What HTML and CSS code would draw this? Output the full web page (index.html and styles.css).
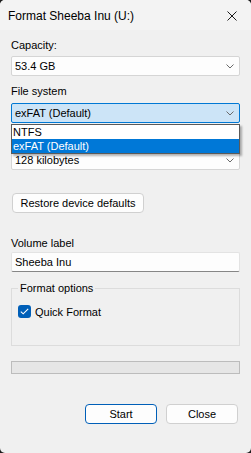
FILE: index.html
```html
<!DOCTYPE html>
<html lang="en">
<head>
    <meta charset="UTF-8">
    <title>Format Sheeba Inu (U:)</title>
    <link rel="stylesheet" href="styles.css">
</head>
<body>
    <div class="window">
        <div class="titlebar">
            <span class="title">Format Sheeba Inu (U:)</span>
            <svg class="close-x" width="10" height="10" viewBox="0 0 10 10">
                <path d="M0.5 0.5 L9.5 9.5 M9.5 0.5 L0.5 9.5" stroke="#1a1a1a" stroke-width="1" fill="none"/>
            </svg>
        </div>
        <div class="content">
            <div class="label lbl-capacity">Capacity:</div>
            <div class="combo">
                <span>53.4 GB</span>
                <svg class="chev" width="8" height="5" viewBox="0 0 8 5"><path d="M0.5 0.5 L4 4 L7.5 0.5" stroke="#6a6a6a" fill="none"/></svg>
            </div>

            <div class="label lbl-fs">File system</div>
            <div class="fs-wrap">
                <div class="combo combo-active">
                    <span>exFAT (Default)</span>
                    <svg class="chev" width="8" height="5" viewBox="0 0 8 5"><path d="M0.5 0.5 L4 4 L7.5 0.5" stroke="#6a6a6a" fill="none"/></svg>
                </div>
                <ul class="droplist">
                    <li>NTFS</li>
                    <li class="selected">exFAT (Default)</li>
                </ul>
            </div>

            <!-- allocation unit label sits under the open list -->
            <div class="label lbl-alloc"></div>
            <div class="combo">
                <span>128 kilobytes</span>
                <svg class="chev" width="8" height="5" viewBox="0 0 8 5"><path d="M0.5 0.5 L4 4 L7.5 0.5" stroke="#6a6a6a" fill="none"/></svg>
            </div>

            <button class="btn btn-restore">Restore device defaults</button>

            <div class="label lbl-volume">Volume label</div>
            <div class="textbox">Sheeba Inu</div>

            <fieldset class="options">
                <legend>Format options</legend>
                <div class="check-row">
                    <span class="checkbox">
                        <svg width="9" height="7" viewBox="0 0 9 7"><path d="M0.8 3.6 L3.2 5.8 L8.2 0.8" stroke="#fff" stroke-width="1.1" fill="none"/></svg>
                    </span>
                    <span>Quick Format</span>
                </div>
            </fieldset>

            <div class="progress"></div>

            <div class="actions">
                <button class="btn btn-default">Start</button>
                <button class="btn">Close</button>
            </div>
        </div>
    </div>
</body>
</html>
```

FILE: styles.css
```css
html, body {
    margin: 0;
    padding: 0;
    background: #1c1c1c;
}
body {
    font-family: "Liberation Sans", Arial, sans-serif;
    font-size: 11px;
    color: #000;
}
.window {
    width: 251px;
    height: 453px;
    background: #f0f0f0;
    border-radius: 5px;
    overflow: hidden;
    display: flex;
    flex-direction: column;
}
.titlebar {
    height: 30px;
    background: #f3f3f3;
    display: flex;
    align-items: center;
    justify-content: space-between;
    padding: 0 14px 0 8px;
    font-size: 12px;
}
.title {
    margin-top: 2px;
}
.close-x {
    margin-top: 2px;
}
.content {
    padding: 0 11px;
    display: flex;
    flex-direction: column;
}
.label {
    height: 15px;
    line-height: 15px;
}
.lbl-capacity {
    margin-top: 8px;
    margin-bottom: 3px;
}
.lbl-fs {
    margin-top: 8px;
    margin-bottom: 4px;
}
.lbl-alloc {
    margin-top: 8px;
    margin-bottom: 4px;
}
.lbl-volume {
    margin-top: 23px;
    margin-bottom: 1px;
}
.combo {
    height: 20px;
    box-sizing: border-box;
    background: #fdfdfd;
    border: 1px solid #d5d5d5;
    border-radius: 2px;
    display: flex;
    align-items: center;
    justify-content: space-between;
    padding: 0 5px 0 3px;
}
.combo-active {
    background: #cce4f7;
    border-color: #0078d4;
}
.fs-wrap {
    position: relative;
}
.droplist {
    position: absolute;
    left: 0;
    right: 0;
    top: 21px;
    margin: 0;
    padding: 0;
    list-style: none;
    background: #fff;
    border: 1px solid #5a5a5a;
    box-shadow: 2px 2px 2px rgba(0, 0, 0, 0.3);
    z-index: 2;
}
.droplist li {
    height: 14px;
    line-height: 14px;
    padding-left: 1px;
}
.droplist li.selected {
    background: #0078d7;
    color: #fff;
}
.btn {
    font-family: inherit;
    font-size: 11px;
    height: 20px;
    box-sizing: border-box;
    background: #fdfdfd;
    border: 1px solid #d0d0d0;
    border-radius: 4px;
    color: #000;
    padding: 0;
}
.btn-restore {
    margin-top: 23px;
    margin-left: 1px;
    width: 132px;
    align-self: flex-start;
}
.textbox {
    height: 20px;
    box-sizing: border-box;
    background: #fdfdfd;
    border: 1px solid #e3e3e3;
    border-bottom-color: #868686;
    border-radius: 2px;
    padding: 0 3px;
    line-height: 18px;
}
.options {
    margin: 10px 0 0 0;
    height: 64px;
    box-sizing: border-box;
    border: 1px solid #dcdcdc;
    padding: 0 6px;
}
.options legend {
    padding: 0 2px;
    margin-left: 0;
}
.check-row {
    display: flex;
    align-items: center;
    gap: 4px;
    margin-top: 11px;
}
.checkbox {
    width: 13px;
    height: 13px;
    border-radius: 3px;
    background: #005fb8;
    display: flex;
    align-items: center;
    justify-content: center;
}
.progress {
    margin-top: 15px;
    height: 13px;
    box-sizing: border-box;
    background: #e6e6e6;
    border: 1px solid #bcbcbc;
}
.actions {
    display: flex;
    justify-content: flex-end;
    gap: 9px;
    margin-top: 30px;
    padding-right: 2px;
}
.actions .btn {
    width: 72px;
}
.btn-default {
    border-color: #005fb8;
}
```
